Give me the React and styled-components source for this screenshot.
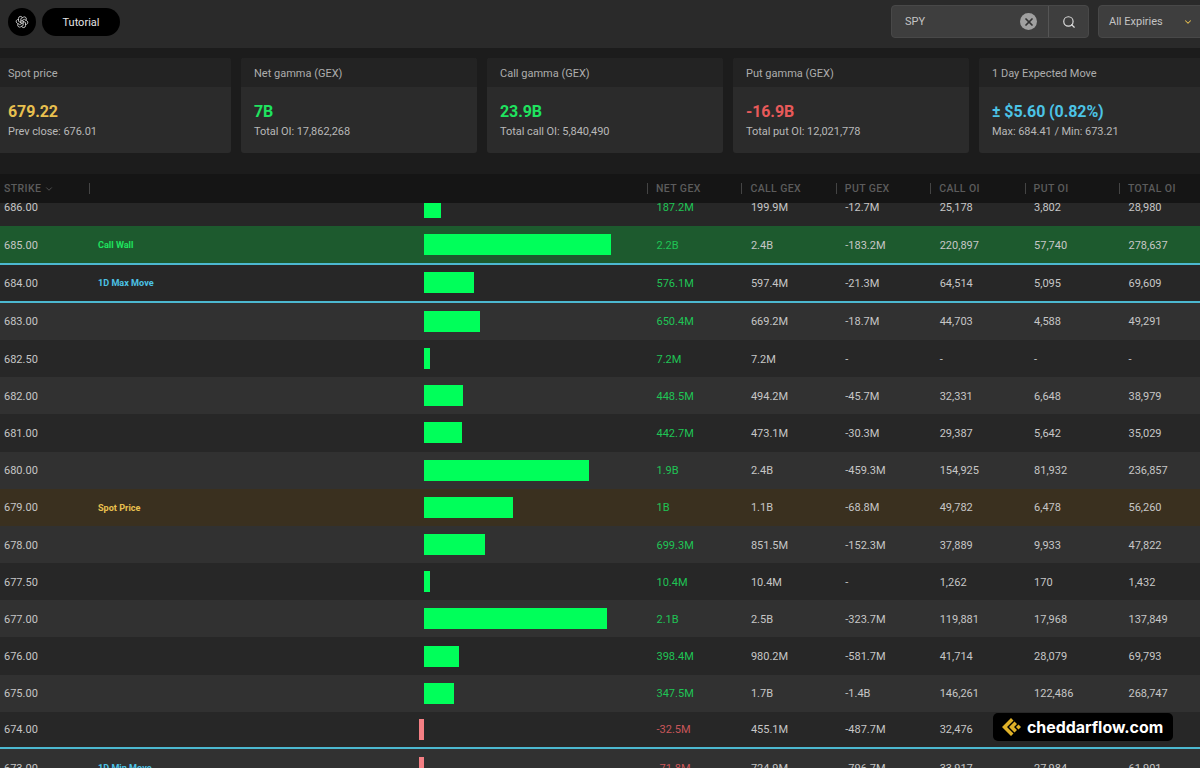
import styled, { createGlobalStyle } from "styled-components";
import { Search, ChevronDown, X } from "lucide-react";
import { TbBrandOpenai } from "react-icons/tb";

const GlobalStyle = createGlobalStyle`
  html, body {
    margin: 0;
    background: #1c1c1c;
    font-family: Roboto, "Liberation Sans", sans-serif;
  }
`;

const Page = styled.div`
  width: 1200px;
  height: 768px;
  overflow: hidden;
  position: relative;
  background: #1c1c1c;
`;

const TopBar = styled.div`
  height: 48px;
  background: #2a2a2a;
  display: flex;
  align-items: center;
  padding: 0 0 5px 8px;
  box-sizing: border-box;
`;

const LogoButton = styled.div`
  width: 28px;
  height: 28px;
  border-radius: 50%;
  background: #000;
  color: #ddd;
  display: flex;
  align-items: center;
  justify-content: center;
  margin-right: 6px;
`;

const TutorialButton = styled.div`
  width: 78px;
  height: 28px;
  border-radius: 14px;
  background: #000;
  color: #e4e4e4;
  font-size: 11px;
  padding-top: 1px;
  box-sizing: border-box;
  display: flex;
  align-items: center;
  justify-content: center;
`;

const SearchBox = styled.div`
  margin-left: auto;
  width: 198px;
  height: 33px;
  box-sizing: border-box;
  background: #3e3e3e;
  border: 1px solid #484848;
  border-radius: 4px;
  display: flex;
  align-items: center;
  color: #c4c4c4;
  font-size: 11px;
`;

const SearchText = styled.div`
  flex: 1;
  padding-left: 13px;
`;

const ClearIcon = styled.div`
  width: 17px;
  height: 17px;
  border-radius: 50%;
  background: #a0a0a0;
  color: #333;
  display: flex;
  align-items: center;
  justify-content: center;
  margin-right: 11px;
`;

const SearchButton = styled.div`
  width: 40px;
  height: 100%;
  border-left: 1px solid #555;
  box-sizing: border-box;
  display: flex;
  align-items: center;
  justify-content: center;
  color: #ddd;
`;

const ExpirySelect = styled.div`
  margin-left: 9px;
  margin-right: -5px;
  width: 107px;
  height: 33px;
  box-sizing: border-box;
  background: #3e3e3e;
  border: 1px solid #484848;
  border-radius: 4px;
  display: flex;
  align-items: center;
  justify-content: space-between;
  padding: 0 11px 0 10px;
  color: #c4c4c4;
  font-size: 11px;
  svg {
    color: #e8c04f;
  }
`;

const CardRow = styled.div`
  display: flex;
  gap: 10px;
  margin: 10px 0 0 -5px;
  width: 1220px;
`;

const Card = styled.div`
  flex: 1;
  height: 95px;
  border-radius: 3px;
  overflow: hidden;
  background: #2b2b2b;
`;

const CardHead = styled.div`
  height: 29px;
  background: #232323;
  color: #adadad;
  font-size: 11px;
  line-height: 32px;
  padding-left: 13px;
`;

const CardBody = styled.div`
  padding: 15px 0 0 13px;
`;

const CardValue = styled.div`
  color: ${(p) => p.$color};
  font-size: 16px;
  font-weight: 700;
  letter-spacing: -0.1px;
  line-height: 20px;
`;

const CardNote = styled.div`
  color: #b8b8b8;
  font-size: 11px;
  letter-spacing: -0.05px;
  line-height: 16px;
  margin-top: 2px;
`;

const Table = styled.div`
  margin-top: 21px;
  width: 1213px;
`;

const columns = "89px 111px 447px repeat(6, 94.4px)";

const HeadRow = styled.div`
  display: grid;
  grid-template-columns: ${columns};
  height: 29px;
  background: #151515;
  align-items: center;
  position: relative;
  z-index: 1;
`;

const HeadCell = styled.div`
  color: #5c5c5c;
  font-size: 10.5px;
  font-weight: 500;
  letter-spacing: 0.4px;
  line-height: 11px;
  display: flex;
  align-items: center;
  gap: 3px;
  box-sizing: border-box;
  height: 11px;
  padding-left: ${(p) => (p.$first ? "4px" : "8px")};
  border-left: ${(p) => (p.$first ? "none" : "1px solid #444")};
`;

const RowList = styled.div`
  margin-top: -14.2px;
`;

const rowBackground = (p) => {
  if (p.$tone === "call") return "#1d5a2e";
  if (p.$tone === "spot") return "#3a301f";
  return p.$odd ? "#313131" : "#272727";
};

const Row = styled.div`
  display: grid;
  grid-template-columns: ${columns};
  height: ${(p) => (p.$lineTop ? "39.6px" : "37.2px")};
  box-sizing: border-box;
  align-items: center;
  background: ${rowBackground};
  color: #c6c6c6;
  font-size: 11px;
  border-top: ${(p) => (p.$lineTop ? "2px solid #4cb8d0" : "none")};
  border-bottom: ${(p) => (p.$lineBottom ? "2px solid #4cb8d0" : "none")};
`;

const StrikeCell = styled.div`
  padding-left: 4px;
  padding-top: 1px;
`;

const TagCell = styled.div`
  padding-left: 9px;
  padding-top: 1px;
  font-size: 9.1px;
  font-weight: 700;
  color: ${(p) => p.$color};
`;

const ChartCell = styled.div`
  display: flex;
  align-items: center;
  height: 21px;
`;

const ChartHalf = styled.div`
  flex: 1;
  height: 100%;
  display: flex;
  justify-content: ${(p) => (p.$left ? "flex-end" : "flex-start")};
`;

const Bar = styled.div`
  height: 100%;
  background: ${(p) => (p.$negative ? "#f47f84" : "#00ff5a")};
`;

const ValueCell = styled.div`
  padding-left: 9.5px;
  padding-top: 1px;
  color: ${(p) => p.$color || "inherit"};
`;

const Watermark = styled.div`
  position: absolute;
  left: 993px;
  top: 713px;
  width: 180px;
  height: 28px;
  border-radius: 5px;
  background: #000;
  color: #fff;
  display: flex;
  align-items: center;
  gap: 5px;
  padding-left: 9px;
  box-sizing: border-box;
  font-family: Inter, sans-serif;
  font-size: 15.9px;
  font-weight: 700;
`;

const cards = [
  { title: "Spot price", value: "679.22", note: "Prev close: 676.01", color: "#e8c04f" },
  { title: "Net gamma (GEX)", value: "7B", note: "Total OI: 17,862,268", color: "#1fe35f" },
  { title: "Call gamma (GEX)", value: "23.9B", note: "Total call OI: 5,840,490", color: "#1fe35f" },
  { title: "Put gamma (GEX)", value: "-16.9B", note: "Total put OI: 12,021,778", color: "#e85a5a" },
  { title: "1 Day Expected Move", value: "± $5.60 (0.82%)", note: "Max: 684.41 / Min: 673.21", color: "#4cc3e6" },
];

const rows = [
  { s: "686.00", w: 17, v: ["187.2M", "199.9M", "-12.7M", "25,178", "3,802", "28,980"] },
  { s: "685.00", w: 187, tag: "Call Wall", tagColor: "#1fe35f", tone: "call", v: ["2.2B", "2.4B", "-183.2M", "220,897", "57,740", "278,637"] },
  { s: "684.00", w: 50, tag: "1D Max Move", tagColor: "#4cc3e6", lineTop: true, lineBottom: true, v: ["576.1M", "597.4M", "-21.3M", "64,514", "5,095", "69,609"] },
  { s: "683.00", w: 56, v: ["650.4M", "669.2M", "-18.7M", "44,703", "4,588", "49,291"] },
  { s: "682.50", w: 6, v: ["7.2M", "7.2M", "-", "-", "-", "-"] },
  { s: "682.00", w: 39, v: ["448.5M", "494.2M", "-45.7M", "32,331", "6,648", "38,979"] },
  { s: "681.00", w: 38, v: ["442.7M", "473.1M", "-30.3M", "29,387", "5,642", "35,029"] },
  { s: "680.00", w: 165, v: ["1.9B", "2.4B", "-459.3M", "154,925", "81,932", "236,857"] },
  { s: "679.00", w: 89, tag: "Spot Price", tagColor: "#e8c04f", tone: "spot", v: ["1B", "1.1B", "-68.8M", "49,782", "6,478", "56,260"] },
  { s: "678.00", w: 61, v: ["699.3M", "851.5M", "-152.3M", "37,889", "9,933", "47,822"] },
  { s: "677.50", w: 6, v: ["10.4M", "10.4M", "-", "1,262", "170", "1,432"] },
  { s: "677.00", w: 183, v: ["2.1B", "2.5B", "-323.7M", "119,881", "17,968", "137,849"] },
  { s: "676.00", w: 35, v: ["398.4M", "980.2M", "-581.7M", "41,714", "28,079", "69,793"] },
  { s: "675.00", w: 30, v: ["347.5M", "1.7B", "-1.4B", "146,261", "122,486", "268,747"] },
  { s: "674.00", w: -5, lineBottom: true, v: ["-32.5M", "455.1M", "-487.7M", "32,476", "", ""] },
  { s: "673.00", w: -5, tag: "1D Min Move", tagColor: "#4cc3e6", v: ["-71.8M", "724.9M", "-796.7M", "33,917", "27,984", "61,901"] },
];

const heads = ["NET GEX", "CALL GEX", "PUT GEX", "CALL OI", "PUT OI", "TOTAL OI"];

const CheddarLogo = () => (
  <svg width="20" height="20" viewBox="0 0 20 20" fill="#e0b228">
    <path d="M9 1 L11.5 3.5 L5 10 L11.5 16.5 L9 19 L0 10 Z" />
    <path d="M12.5 4.5 L15 7 L12 10 L15 13 L12.5 15.5 L7 10 Z" />
    <path d="M16.5 7.5 L19 10 L16.5 12.5 L14 10 Z" />
  </svg>
);

export default function App() {
  return (
    <Page>
      <GlobalStyle />
      <TopBar>
        <LogoButton>
          <TbBrandOpenai size={14} strokeWidth={1.4} />
        </LogoButton>
        <TutorialButton>Tutorial</TutorialButton>
        <SearchBox>
          <SearchText>SPY</SearchText>
          <ClearIcon>
            <X size={12} strokeWidth={3.5} />
          </ClearIcon>
          <SearchButton>
            <Search size={14} />
          </SearchButton>
        </SearchBox>
        <ExpirySelect>
          All Expiries
          <ChevronDown size={10} strokeWidth={2.5} />
        </ExpirySelect>
      </TopBar>

      <CardRow>
        {cards.map((c) => (
          <Card key={c.title}>
            <CardHead>{c.title}</CardHead>
            <CardBody>
              <CardValue $color={c.color}>{c.value}</CardValue>
              <CardNote>{c.note}</CardNote>
            </CardBody>
          </Card>
        ))}
      </CardRow>

      <Table>
        <HeadRow>
          <HeadCell $first>
            STRIKE <ChevronDown size={10} />
          </HeadCell>
          <HeadCell />
          <div />
          {heads.map((h) => (
            <HeadCell key={h}>{h}</HeadCell>
          ))}
        </HeadRow>
        <RowList>
          {rows.map((r, i) => (
            <Row key={r.s} $odd={i % 2 === 1} $tone={r.tone} $lineTop={r.lineTop} $lineBottom={r.lineBottom}>
              <StrikeCell>{r.s}</StrikeCell>
              <TagCell $color={r.tagColor}>{r.tag}</TagCell>
              <ChartCell>
                <ChartHalf $left>{r.w < 0 && <Bar $negative style={{ width: -r.w }} />}</ChartHalf>
                <ChartHalf>{r.w > 0 && <Bar style={{ width: r.w }} />}</ChartHalf>
              </ChartCell>
              {r.v.map((val, j) => (
                <ValueCell key={j} $color={j === 0 ? (r.w < 0 ? "#c9565a" : "#1fc455") : undefined}>
                  {val}
                </ValueCell>
              ))}
            </Row>
          ))}
        </RowList>
      </Table>

      <Watermark>
        <CheddarLogo />
        cheddarflow.com
      </Watermark>
    </Page>
  );
}
